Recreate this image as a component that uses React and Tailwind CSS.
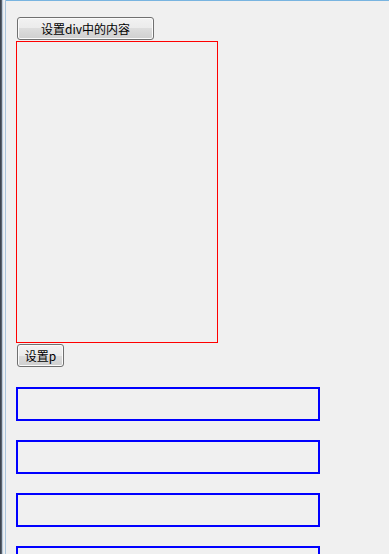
export default function App() {
  const btn =
    "shrink-0 h-[23px] flex items-center justify-center rounded-[3px] border border-[#707070] bg-[linear-gradient(to_bottom,#f2f2f2_0%,#ebebeb_50%,#dddddd_50%,#cfcfcf_100%)] shadow-[inset_0_0_0_1px_#fbfbfb] text-[12px] text-black leading-none";
  const font = { fontFamily: '"Noto Sans CJK SC", "Liberation Sans", sans-serif' };
  const box = "shrink-0 w-[304px] h-[34px] border-2 border-[#0000ff]";
  return (
    <div className="flex w-[389px] h-[554px] overflow-hidden bg-[#f0f0f0]" style={font}>
      <div className="flex h-full shrink-0">
        <div className="w-px h-full bg-[#3c4450]" />
        <div className="w-px h-full bg-[#5a626c]" />
        <div className="w-px h-full bg-[#b8c8d8]" />
        <div className="w-px h-full bg-[#e8ecf0]" />
        <div className="w-px h-full bg-[#f0f0f0]" />
        <div className="w-px h-full bg-[#a8c4dc]" />
      </div>
      <div className="flex-1 flex flex-col border-t border-[#78b4e0] min-h-0">
        <button className={btn + " mt-[16px] ml-[11px] w-[137px]"}>设置div中的内容</button>
        <div className="shrink-0 mt-[1px] ml-[10px] w-[202px] h-[302px] border border-[#ff0000]" />
        <button className={btn + " mt-[1px] ml-[11px] w-[47px]"}>设置p</button>
        <div className="shrink-0 mt-[20px] ml-[10px] flex flex-col gap-[19px]">
          <p className={box} />
          <p className={box} />
          <p className={box} />
          <p className={box} />
        </div>
      </div>
    </div>
  );
}
